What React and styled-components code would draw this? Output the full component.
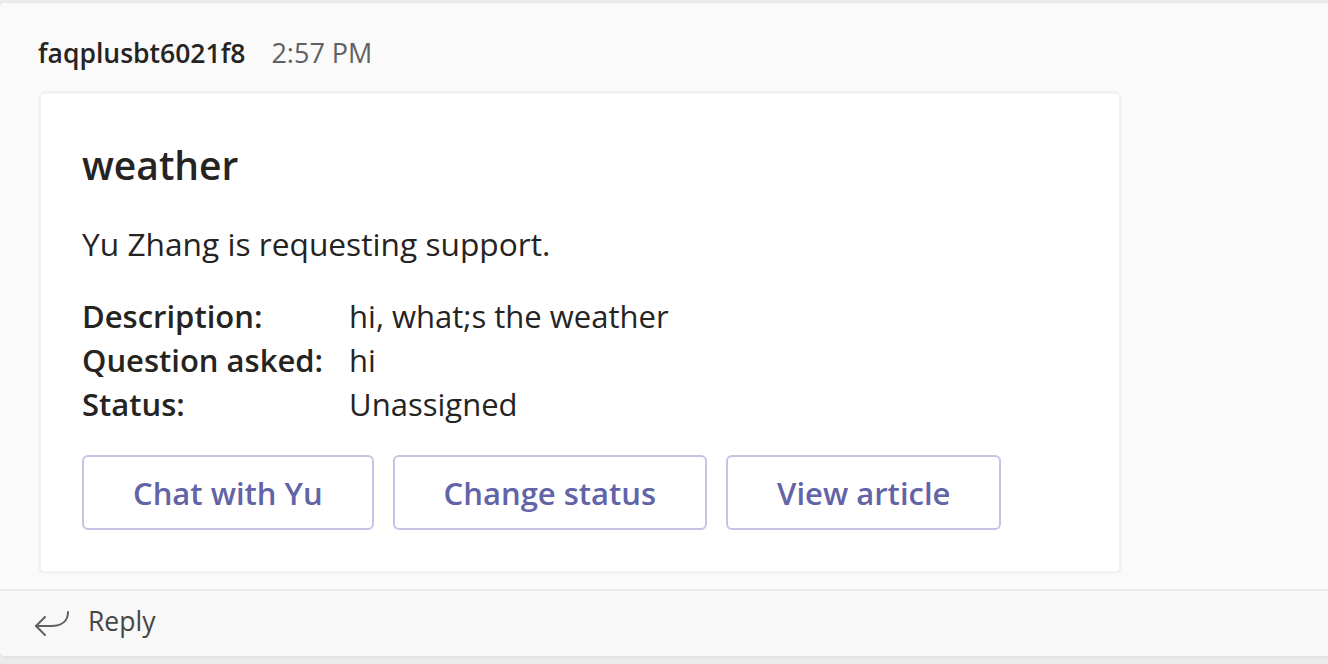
import React from "react";
import styled, { createGlobalStyle } from "styled-components";

const Global = createGlobalStyle`
  html, body { margin: 0; padding: 0; background: #ebebeb; }
  body { font-family: "Open Sans", "Noto Sans", sans-serif; color: #252423; }
  * { box-sizing: border-box; }
`;

const Page = styled.div`
  height: 664px;
  padding: 3px 0 8px 0;
  overflow: hidden;
`;

const Message = styled.div`
  height: 653px;
  background: #fafafa;
  border-radius: 5px 0 0 5px;
  box-shadow: 0 1px 3px rgba(0, 0, 0, 0.06);
  display: flex;
  flex-direction: column;
`;

const Header = styled.div`
  display: flex;
  align-items: baseline;
  gap: 26px;
  padding: 32px 0 0 38px;
  line-height: 36px;
  font-size: 26.5px;
`;

const Name = styled.span`
  font-weight: 600;
  color: #252423;
`;

const Time = styled.span`
  color: #616161;
  font-size: 27px;
`;

const Card = styled.div`
  width: 1084px;
  margin: 20px 0 0 38px;
  background: #ffffff;
  border: 3px solid #f2f2f2;
  border-radius: 7px;
  padding: 45px 41px 41px 41px;
`;

const Title = styled.div`
  font-size: 39px;
  line-height: 52px;
  font-weight: 600;
  color: #252423;
`;

const Body = styled.div`
  margin-top: 31px;
  font-size: 31.7px;
  line-height: 44px;
`;

const Facts = styled.div`
  margin-top: 28px;
  display: grid;
  grid-template-columns: max-content 1fr;
  column-gap: 26px;
  font-size: 31px;
  line-height: 44px;
`;

const FactLabel = styled.div`
  font-weight: 600;
`;

const FactValue = styled.div``;

const Actions = styled.div`
  margin-top: 29px;
  display: flex;
  gap: 19px;
`;

const ActionButton = styled.button`
  height: 75px;
  padding: 0 49px;
  background: #ffffff;
  border: 2px solid #c4c4e6;
  border-radius: 6px;
  color: #6264a7;
  font-family: "Open Sans", "Noto Sans", sans-serif;
  font-size: 31px;
  font-weight: 600;
  cursor: pointer;
`;

const Divider = styled.div`
  margin-top: 15px;
  border-top: 2px solid #ebebeb;
`;

const ReplyBar = styled.div`
  flex: 1;
  background: #f8f8f8;
  border-radius: 0 0 0 5px;
  display: flex;
  align-items: center;
  gap: 19px;
  padding: 0 0 5px 35px;
  font-size: 26.5px;
  color: #484644;
`;

const ReplyIcon = styled.svg`
  margin-top: 4px;
`;

const ReplyGlyph = () => (
  <ReplyIcon width="34" height="27" viewBox="0 0 34 27" fill="none">
    <path
      d="M33 2 C33 10 28 16 16 16 L1 16"
      stroke="#616161"
      strokeWidth="2"
      strokeLinecap="round"
      strokeLinejoin="round"
    />
    <path
      d="M10 7 L1 16 L10 25"
      stroke="#616161"
      strokeWidth="2"
      strokeLinecap="round"
      strokeLinejoin="round"
    />
  </ReplyIcon>
);

const facts = [
  ["Description:", "hi, what;s the weather"],
  ["Question asked:", "hi"],
  ["Status:", "Unassigned"],
];

export default function App() {
  return (
    <>
      <Global />
      <Page>
        <Message>
          <Header>
            <Name>faqplusbt6021f8</Name>
            <Time>2:57 PM</Time>
          </Header>
          <Card>
            <Title>weather</Title>
            <Body>Yu Zhang is requesting support.</Body>
            <Facts>
              {facts.map(([k, v]) => (
                <React.Fragment key={k}>
                  <FactLabel>{k}</FactLabel>
                  <FactValue>{v}</FactValue>
                </React.Fragment>
              ))}
            </Facts>
            <Actions>
              <ActionButton>Chat with Yu</ActionButton>
              <ActionButton>Change status</ActionButton>
              <ActionButton>View article</ActionButton>
            </Actions>
          </Card>
          <Divider />
          <ReplyBar>
            <ReplyGlyph />
            <span>Reply</span>
          </ReplyBar>
        </Message>
      </Page>
    </>
  );
}
